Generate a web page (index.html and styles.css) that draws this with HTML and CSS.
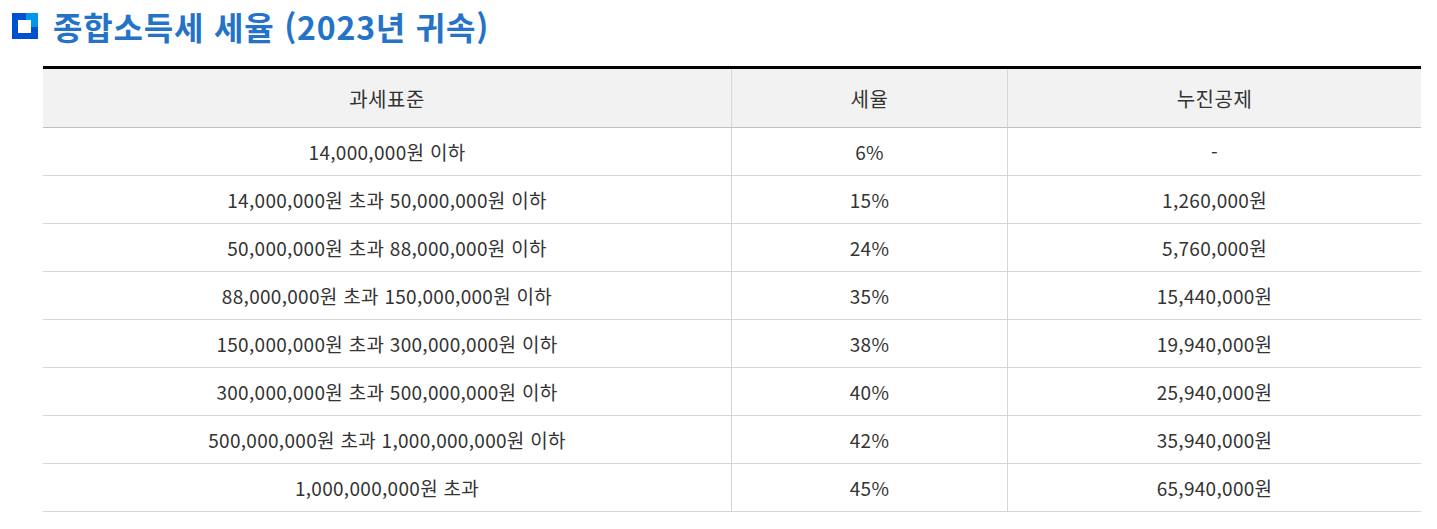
FILE: index.html
```html
<!DOCTYPE html>
<html lang="ko">
<head>
<meta charset="utf-8">
<title>종합소득세 세율</title>
<link rel="stylesheet" href="styles.css">
</head>
<body>
<div class="page">
  <h2 class="title">
    <span class="title-icon" aria-hidden="true">
      <svg width="26" height="26" viewBox="0 0 26 26">
        <rect x="0" y="0" width="26" height="26" fill="#0050d0"/>
        <rect x="14" y="0" width="12" height="14" fill="#0098e6"/>
        <rect x="6" y="7" width="13" height="13" fill="#ffffff"/>
      </svg>
    </span>
    <span class="title-text">종합소득세 세율 (2023년 귀속)</span>
  </h2>
  <table class="tax-table">
    <colgroup>
      <col class="c1"><col class="c2"><col class="c3">
    </colgroup>
    <thead>
      <tr><th>과세표준</th><th>세율</th><th>누진공제</th></tr>
    </thead>
    <tbody>
      <tr><td>14,000,000원 이하</td><td>6%</td><td>-</td></tr>
      <tr><td>14,000,000원 초과 50,000,000원 이하</td><td>15%</td><td>1,260,000원</td></tr>
      <tr><td>50,000,000원 초과 88,000,000원 이하</td><td>24%</td><td>5,760,000원</td></tr>
      <tr><td>88,000,000원 초과 150,000,000원 이하</td><td>35%</td><td>15,440,000원</td></tr>
      <tr><td>150,000,000원 초과 300,000,000원 이하</td><td>38%</td><td>19,940,000원</td></tr>
      <tr><td>300,000,000원 초과 500,000,000원 이하</td><td>40%</td><td>25,940,000원</td></tr>
      <tr><td>500,000,000원 초과 1,000,000,000원 이하</td><td>42%</td><td>35,940,000원</td></tr>
      <tr><td>1,000,000,000원 초과</td><td>45%</td><td>65,940,000원</td></tr>
    </tbody>
  </table>
</div>
</body>
</html>
```
FILE: styles.css
```css
html, body {
  margin: 0;
  padding: 0;
  background: #ffffff;
}
body {
  font-family: "Noto Sans CJK KR", "Noto Sans", sans-serif;
  color: #333333;
}
.page {
  padding: 12px 16px 0 12px;
}
.title {
  display: flex;
  align-items: center;
  gap: 15px;
  margin: 0;
  height: 28px;
  font-size: 32px;
  font-weight: 700;
  color: #2473c8;
  letter-spacing: 0.8px;
}
.title-icon {
  display: flex;
  width: 26px;
  height: 26px;
}
.title-text {
  line-height: 28px;
}
.tax-table {
  margin: 26px 0 0 31px;
  width: 1378px;
  border-collapse: separate;
  border-spacing: 0;
  border-top: 3px solid #000000;
  table-layout: fixed;
  font-size: 19px;
  letter-spacing: 0.3px;
}
.c1 { width: 688px; }
.c2 { width: 276px; }
.c3 { width: 414px; }
.tax-table th,
.tax-table td {
  padding: 0;
  text-align: center;
  vertical-align: middle;
  font-weight: 400;
  color: #333333;
}
.tax-table th {
  height: 58px;
  background: #f2f2f2;
  border-bottom: 1px solid #c0c0c0;
  font-size: 20px;
  letter-spacing: 0.5px;
}
.tax-table td {
  height: 47px;
  border-bottom: 1px solid #d6d6d6;
}
.tax-table th + th,
.tax-table td + td {
  border-left: 1px solid #d6d6d6;
}
```
